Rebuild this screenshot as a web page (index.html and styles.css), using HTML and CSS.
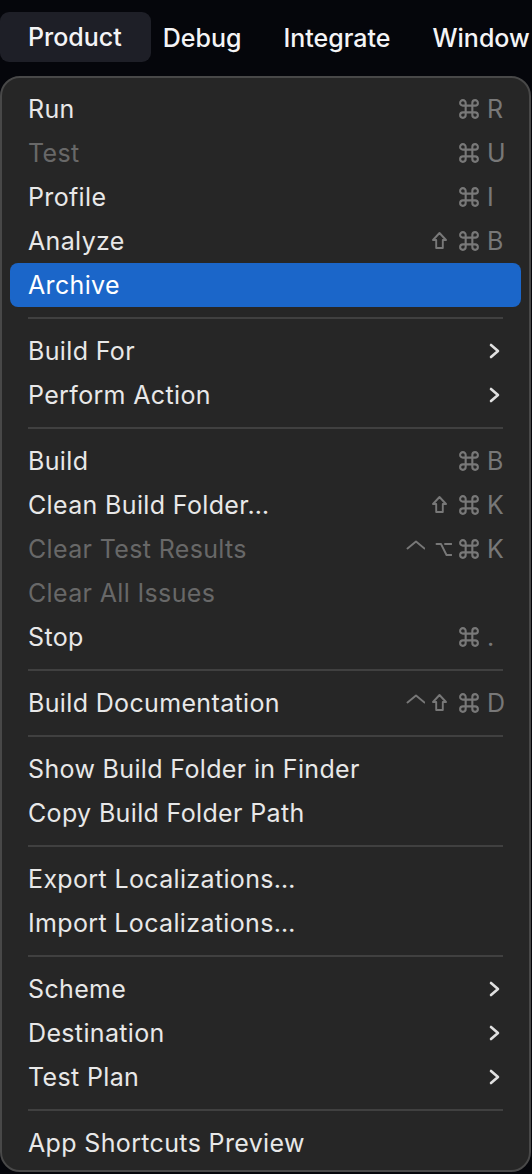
FILE: index.html
```html
<!DOCTYPE html>
<html>
<head>
<meta charset="utf-8">
<link rel="stylesheet" href="styles.css">
</head>
<body>
<div class="menubar">
  <div class="mb-item active">Product</div>
  <div class="mb-item first">Debug</div>
  <div class="mb-item">Integrate</div>
  <div class="mb-item">Window</div>
</div>
<div class="menu">
  <div class="row"><span class="label">Run</span><span class="sc"><svg class="mod" viewBox="1 1 18 18"><path d="M7 7H4.5A2.5 2.5 0 1 1 7 4.5V15.5A2.5 2.5 0 1 1 4.5 13H15.5A2.5 2.5 0 1 1 13 15.5V4.5A2.5 2.5 0 1 1 15.5 7Z"/></svg><span class="key">R</span></span></div>
  <div class="row disabled"><span class="label">Test</span><span class="sc"><svg class="mod" viewBox="1 1 18 18"><path d="M7 7H4.5A2.5 2.5 0 1 1 7 4.5V15.5A2.5 2.5 0 1 1 4.5 13H15.5A2.5 2.5 0 1 1 13 15.5V4.5A2.5 2.5 0 1 1 15.5 7Z"/></svg><span class="key">U</span></span></div>
  <div class="row"><span class="label">Profile</span><span class="sc"><svg class="mod" viewBox="1 1 18 18"><path d="M7 7H4.5A2.5 2.5 0 1 1 7 4.5V15.5A2.5 2.5 0 1 1 4.5 13H15.5A2.5 2.5 0 1 1 13 15.5V4.5A2.5 2.5 0 1 1 15.5 7Z"/></svg><span class="key">I</span></span></div>
  <div class="row"><span class="label">Analyze</span><span class="sc"><svg class="mod" viewBox="0 0 20 20"><polygon points="7.5,2 14,9 10.8,9 10.8,17 4.2,17 4.2,9 1,9"/></svg><svg class="mod" viewBox="1 1 18 18"><path d="M7 7H4.5A2.5 2.5 0 1 1 7 4.5V15.5A2.5 2.5 0 1 1 4.5 13H15.5A2.5 2.5 0 1 1 13 15.5V4.5A2.5 2.5 0 1 1 15.5 7Z"/></svg><span class="key">B</span></span></div>
  <div class="row selected"><span class="label">Archive</span></div>
  <div class="sep"></div>
  <div class="row"><span class="label">Build For</span><svg class="chev" viewBox="0 0 12 16"><polyline points="2,2 9,8 2,14"/></svg></div>
  <div class="row"><span class="label">Perform Action</span><svg class="chev" viewBox="0 0 12 16"><polyline points="2,2 9,8 2,14"/></svg></div>
  <div class="sep"></div>
  <div class="row"><span class="label">Build</span><span class="sc"><svg class="mod" viewBox="1 1 18 18"><path d="M7 7H4.5A2.5 2.5 0 1 1 7 4.5V15.5A2.5 2.5 0 1 1 4.5 13H15.5A2.5 2.5 0 1 1 13 15.5V4.5A2.5 2.5 0 1 1 15.5 7Z"/></svg><span class="key">B</span></span></div>
  <div class="row"><span class="label">Clean Build Folder…</span><span class="sc"><svg class="mod" viewBox="0 0 20 20"><polygon points="7.5,2 14,9 10.8,9 10.8,17 4.2,17 4.2,9 1,9"/></svg><svg class="mod" viewBox="1 1 18 18"><path d="M7 7H4.5A2.5 2.5 0 1 1 7 4.5V15.5A2.5 2.5 0 1 1 4.5 13H15.5A2.5 2.5 0 1 1 13 15.5V4.5A2.5 2.5 0 1 1 15.5 7Z"/></svg><span class="key">K</span></span></div>
  <div class="row disabled"><span class="label">Clear Test Results</span><span class="sc"><svg class="mod" viewBox="0 0 20 20"><polyline points="2.5,9.5 11,2.5 19.5,9.5"/></svg><svg class="mod" viewBox="0 0 20 20"><path d="M4.5 5H9L14.5 16H19.5M13 5H19.5"/></svg><svg class="mod" viewBox="1 1 18 18"><path d="M7 7H4.5A2.5 2.5 0 1 1 7 4.5V15.5A2.5 2.5 0 1 1 4.5 13H15.5A2.5 2.5 0 1 1 13 15.5V4.5A2.5 2.5 0 1 1 15.5 7Z"/></svg><span class="key">K</span></span></div>
  <div class="row disabled"><span class="label">Clear All Issues</span></div>
  <div class="row"><span class="label">Stop</span><span class="sc"><svg class="mod" viewBox="1 1 18 18"><path d="M7 7H4.5A2.5 2.5 0 1 1 7 4.5V15.5A2.5 2.5 0 1 1 4.5 13H15.5A2.5 2.5 0 1 1 13 15.5V4.5A2.5 2.5 0 1 1 15.5 7Z"/></svg><span class="key">.</span></span></div>
  <div class="sep"></div>
  <div class="row"><span class="label">Build Documentation</span><span class="sc"><svg class="mod" viewBox="0 0 20 20"><polyline points="2.5,9.5 11,2.5 19.5,9.5"/></svg><svg class="mod" viewBox="0 0 20 20"><polygon points="7.5,2 14,9 10.8,9 10.8,17 4.2,17 4.2,9 1,9"/></svg><svg class="mod" viewBox="1 1 18 18"><path d="M7 7H4.5A2.5 2.5 0 1 1 7 4.5V15.5A2.5 2.5 0 1 1 4.5 13H15.5A2.5 2.5 0 1 1 13 15.5V4.5A2.5 2.5 0 1 1 15.5 7Z"/></svg><span class="key">D</span></span></div>
  <div class="sep"></div>
  <div class="row"><span class="label">Show Build Folder in Finder</span></div>
  <div class="row"><span class="label">Copy Build Folder Path</span></div>
  <div class="sep"></div>
  <div class="row"><span class="label">Export Localizations…</span></div>
  <div class="row"><span class="label">Import Localizations…</span></div>
  <div class="sep"></div>
  <div class="row"><span class="label">Scheme</span><svg class="chev" viewBox="0 0 12 16"><polyline points="2,2 9,8 2,14"/></svg></div>
  <div class="row"><span class="label">Destination</span><svg class="chev" viewBox="0 0 12 16"><polyline points="2,2 9,8 2,14"/></svg></div>
  <div class="row"><span class="label">Test Plan</span><svg class="chev" viewBox="0 0 12 16"><polyline points="2,2 9,8 2,14"/></svg></div>
  <div class="sep"></div>
  <div class="row"><span class="label">App Shortcuts Preview</span></div>
</div>
</body>
</html>
```

FILE: styles.css
```css
* { box-sizing: border-box; }
html, body {
  margin: 0;
  padding: 0;
  background: #05060b;
  width: 532px;
  height: 1174px;
  overflow: hidden;
  font-family: Inter, "Noto Sans", sans-serif;
}
.menubar {
  height: 76px;
  display: flex;
  align-items: center;
  white-space: nowrap;
  color: #f4f4f6;
  font-size: 25px;
  font-weight: 500;
}
.mb-item {
  margin-left: 42px;
  line-height: 50px;
}
.mb-item.active {
  margin-left: 0;
  margin-top: -2px;
  padding: 0 29px 0 28px;
  background: #1e1f27;
  border-radius: 9px;
}
.mb-item.first { margin-left: 12px; }
.menu {
  margin: 0 1px 0 0;
  height: 1096px;
  background: #262626;
  border: 2px solid #484848;
  border-radius: 20px;
  padding: 9px 8px 5px 8px;
  overflow: hidden;
}
.row {
  height: 44px;
  display: flex;
  align-items: center;
  padding: 0 16px 0 18px;
  border-radius: 8px;
  color: #e8e8e8;
  font-size: 25px;
  font-weight: 400;
  letter-spacing: 0.35px;
  white-space: nowrap;
}
.row.disabled { color: #686868; }
.row.selected { background: #1b66c9; color: #ffffff; }
.label { flex: 1; }
.sc {
  display: flex;
  align-items: center;
  gap: 7px;
  color: #787878;
}
.mod {
  width: 20px;
  height: 20px;
  fill: none;
  stroke: currentColor;
  stroke-width: 1.9;
  stroke-linejoin: round;
  stroke-linecap: round;
}
.key {
  width: 18px;
  margin-left: 1px;
  font-size: 25px;
  letter-spacing: 0;
}
.chev {
  width: 12px;
  height: 16px;
  margin-right: 4px;
  fill: none;
  stroke: #e0e0e0;
  stroke-width: 2.6;
  stroke-linecap: round;
  stroke-linejoin: round;
}
.sep {
  height: 22px;
  display: flex;
  align-items: center;
  padding: 0 18px;
}
.sep::before {
  content: "";
  display: block;
  flex: 1;
  height: 2px;
  background: #404040;
}
```
